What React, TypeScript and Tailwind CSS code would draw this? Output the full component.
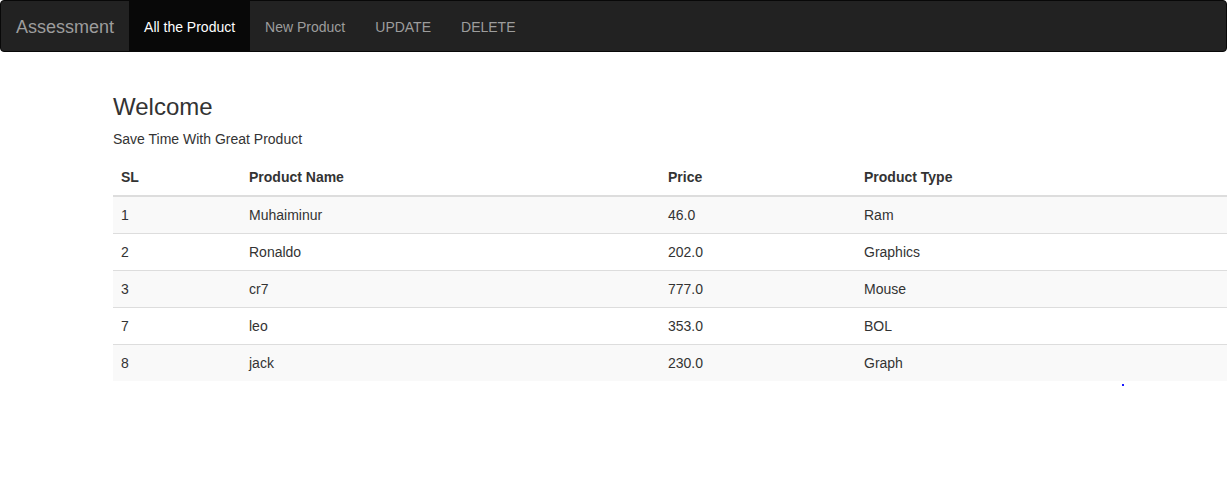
const products = [
  { sl: 1, name: "Muhaiminur", price: "46.0", type: "Ram" },
  { sl: 2, name: "Ronaldo", price: "202.0", type: "Graphics" },
  { sl: 3, name: "cr7", price: "777.0", type: "Mouse" },
  { sl: 7, name: "leo", price: "353.0", type: "BOL" },
  { sl: 8, name: "jack", price: "230.0", type: "Graph" },
];

export default function App() {
  return (
    <div className="min-h-[484px] bg-white text-[#333] text-[14px] leading-[20px] overflow-hidden font-['Liberation_Sans',Arial,sans-serif]">
      <nav className="flex h-[52px] bg-[#222] border border-[#080808] rounded-[4px]">
        <a className="block px-[15px] pt-[16px] pb-[14px] text-[18px] leading-[20px] text-[#9d9d9d]">Assessment</a>
        <a className="block px-[15px] pt-[16px] pb-[14px] bg-[#080808] text-white">All the Product</a>
        <a className="block px-[15px] pt-[16px] pb-[14px] text-[#9d9d9d]">New Product</a>
        <a className="block px-[15px] pt-[16px] pb-[14px] text-[#9d9d9d]">UPDATE</a>
        <a className="block px-[15px] pt-[16px] pb-[14px] text-[#9d9d9d]">DELETE</a>
      </nav>

      <div className="ml-[113px] pt-[42px]">
        <h3 className="mb-[9px] text-[24px] leading-[26.4px]">Welcome</h3>
        <p className="mb-[10px]">Save Time With Great Product</p>
        <table className="w-[1114px] border-collapse text-left">
          <thead>
            <tr className="border-b-2 border-[#ddd]">
              <th className="w-[128px] p-[8px] font-bold">SL</th>
              <th className="w-[419px] p-[8px] font-bold">Product Name</th>
              <th className="w-[196px] p-[8px] font-bold">Price</th>
              <th className="p-[8px] font-bold">Product Type</th>
            </tr>
          </thead>
          <tbody>
            {products.map((p, i) => (
              <tr key={p.sl} className={`${i > 0 ? "border-t border-[#ddd]" : ""} ${i % 2 === 0 ? "bg-[#f9f9f9]" : ""}`}>
                <td className="p-[8px]">{p.sl}</td>
                <td className="p-[8px]">{p.name}</td>
                <td className="p-[8px]">{p.price}</td>
                <td className="p-[8px]">{p.type}</td>
              </tr>
            ))}
          </tbody>
        </table>
        <div className="ml-[1009px] mt-[3px] w-[2px] h-[2px] bg-[#1a1aff]"></div>
      </div>
    </div>
  );
}
